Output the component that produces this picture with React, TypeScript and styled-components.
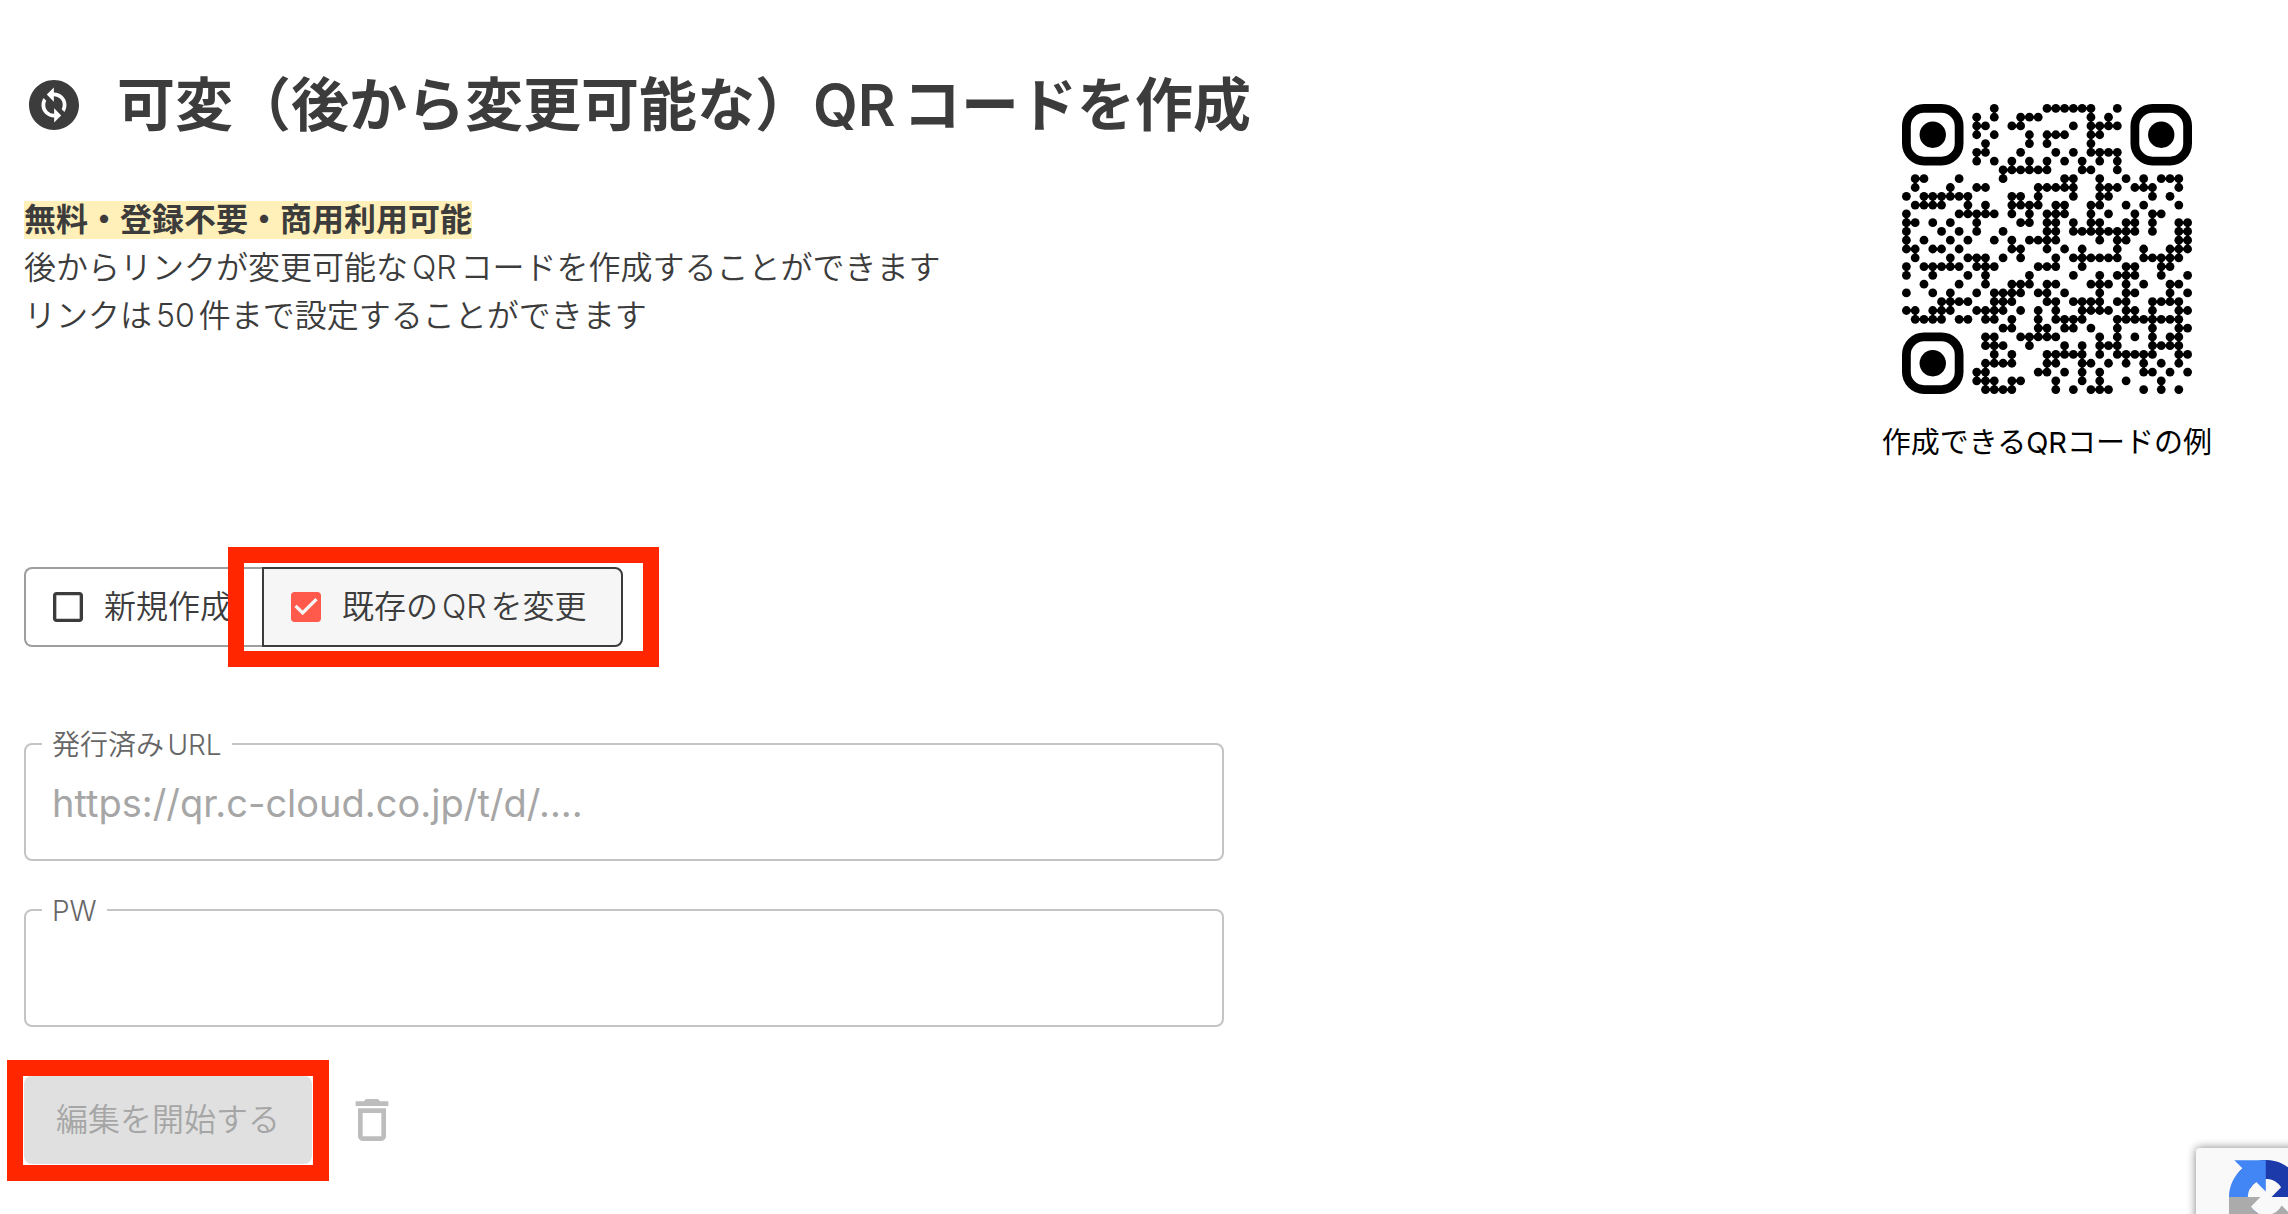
import React from "react";
import styled, { createGlobalStyle } from "styled-components";

const GlobalStyle = createGlobalStyle`
  *, *::before, *::after { box-sizing: border-box; }
  body {
    margin: 0;
    background: #fff;
    color: #3c3c3c;
    font-family: Inter, "Noto Sans CJK JP", sans-serif;
    font-size: 32px;
    font-weight: 350;
    line-height: 48px;
    text-autospace: normal;
  }
`;

const Page = styled.main`
  padding: 0 76px 32px 24px;
`;

const Header = styled.header`
  display: flex;
  justify-content: space-between;
  align-items: flex-start;
  margin-bottom: 103px;
`;

const Intro = styled.div`
  padding-top: 62px;
`;

const TitleRow = styled.div`
  display: flex;
  align-items: center;
  gap: 33px;
  margin-bottom: 48px;
`;

const TitleIcon = styled.svg`
  width: 60px;
  height: 60px;
  fill: currentColor;
`;

const Title = styled.h1`
  margin: 0;
  font-size: 58px;
  line-height: 86px;
  font-weight: 600;
`;

const Lead = styled.p`
  margin: 0;
`;

const Highlight = styled.mark`
  display: inline-block;
  background: #ffefb8;
  color: inherit;
  font-weight: 700;
  line-height: 38px;
`;

const Example = styled.figure`
  display: flex;
  flex-direction: column;
  align-items: center;
  gap: 28px;
  margin: 0;
  padding-top: 104px;
`;

const QrImage = styled.svg`
  width: 290px;
  height: 290px;
`;

const Caption = styled.figcaption`
  color: #000;
  font-size: 29px;
  font-weight: 400;
  line-height: 42px;
  text-autospace: no-autospace;
`;

const ToggleGroup = styled.div`
  display: flex;
  margin-bottom: 82px;
`;

const Toggle = styled.label<{ $selected?: boolean }>`
  position: relative;
  display: flex;
  align-items: center;
  gap: 16px;
  height: 80px;
  padding: 0 ${(p) => (p.$selected ? "34px" : "30px")} 0 22px;
  border: 2px solid ${(p) => (p.$selected ? "#3c3c3c" : "#9e9e9e")};
  border-right-width: ${(p) => (p.$selected ? "2px" : "0")};
  border-radius: ${(p) => (p.$selected ? "0 8px 8px 0" : "8px 0 0 8px")};
  background: ${(p) => (p.$selected ? "#f6f6f6" : "#fff")};
  cursor: pointer;
`;

const HiddenCheck = styled.input`
  position: absolute;
  inset: 0;
  width: 100%;
  height: 100%;
  margin: 0;
  opacity: 0;
`;

const CheckIcon = styled.svg<{ $selected?: boolean }>`
  width: 40px;
  height: 40px;
  fill: ${(p) => (p.$selected ? "#ff5a4c" : "#3c3c3c")};
`;

const Marked = styled.div`
  position: relative;
  display: flex;
`;

const Marker = styled.span<{ $inset: string }>`
  position: absolute;
  inset: ${(p) => p.$inset};
  border: 16px solid #ff2600;
  pointer-events: none;
  z-index: 1;
`;

const Form = styled.form`
  display: flex;
  flex-direction: column;
  gap: 34px;
  max-width: 1200px;
`;

const Field = styled.fieldset`
  min-width: 0;
  height: 132px;
  margin: 0;
  padding: 0;
  border: 2px solid #c4c4c4;
  border-radius: 8px;
`;

const FieldLegend = styled.legend`
  margin-left: 16px;
  padding: 2px 10px 0;
  color: #666;
  font-size: 28px;
  line-height: 28px;
`;

const TextInput = styled.input`
  display: block;
  width: 100%;
  height: 88px;
  padding: 0 26px;
  border: 0;
  outline: 0;
  background: transparent;
  color: #3c3c3c;
  font: inherit;
  font-size: 38px;
  font-weight: 400;

  &::placeholder { color: #a6a6a6; opacity: 1; }
`;

const Actions = styled.div`
  display: flex;
  align-items: center;
  gap: 32px;
  padding-top: 15px;
`;

const StartButton = styled.button`
  height: 88px;
  padding: 0 32px;
  border: 0;
  border-radius: 8px;
  background: #e0e0e0;
  color: #a6a6a6;
  font: inherit;
`;

const DeleteButton = styled.button`
  display: flex;
  padding: 0;
  border: 0;
  background: none;
  color: #bdbdbd;

  svg { width: 56px; height: 56px; fill: currentColor; }
`;

const RecaptchaBadge = styled.aside`
  position: fixed;
  right: -420px;
  bottom: -54px;
  width: 512px;
  height: 120px;
  padding: 12px 33px;
  border-radius: 4px;
  background: #f9f9f9;
  box-shadow: 0 0 10px gray;

  svg { display: block; width: 74px; height: 74px; }
`;

/* Dark columns of every row, finder patterns left out. */
const QR_ROWS: number[][] = [
  [10, 16, 17, 18, 19, 20, 21, 24],
  [8, 10, 13, 14, 15, 21, 23],
  [8, 9, 12, 13, 19, 21, 22, 23, 24],
  [8, 10, 14, 16, 17, 18, 21, 22],
  [9, 14, 16, 21],
  [8, 9, 13, 17, 19, 21, 22, 23, 24],
  [8, 10, 12, 14, 16, 18, 20, 22, 24],
  [11, 12, 13, 14, 15, 16, 20, 21, 24],
  [1, 2, 6, 11, 18, 19, 22, 25, 27, 29, 30, 31],
  [1, 5, 8, 9, 15, 16, 17, 18, 19, 22, 23, 24, 26, 27, 28, 31],
  [0, 2, 3, 4, 5, 6, 7, 12, 13, 15, 19, 22, 23, 28, 30],
  [1, 2, 3, 4, 7, 9, 12, 13, 14, 15, 17, 18, 21, 22, 25, 27, 31],
  [0, 6, 7, 8, 9, 10, 12, 14, 16, 17, 18, 21, 23, 26, 28, 29],
  [0, 1, 3, 5, 8, 13, 14, 16, 17, 19, 21, 22, 25, 26, 28, 31, 32],
  [0, 4, 6, 8, 11, 16, 17, 19, 20, 21, 22, 23, 24, 25, 26, 28, 31, 32],
  [0, 2, 5, 7, 10, 12, 14, 15, 16, 17, 22, 24, 25, 31, 32],
  [0, 1, 3, 4, 6, 12, 13, 16, 18, 20, 24, 27, 30, 31, 32],
  [1, 5, 7, 8, 9, 11, 13, 17, 19, 20, 21, 22, 23, 24, 27, 28, 29, 30, 31],
  [0, 2, 3, 4, 5, 6, 8, 9, 10, 15, 16, 17, 20, 25, 26, 29, 30],
  [0, 3, 7, 9, 14, 19, 22, 24, 25, 26, 29, 32],
  [2, 6, 9, 12, 13, 14, 16, 17, 21, 22, 23, 25, 27, 30, 31],
  [0, 3, 5, 8, 10, 11, 12, 13, 15, 16, 18, 22, 25, 26, 30, 32],
  [4, 5, 6, 7, 10, 11, 12, 16, 17, 19, 20, 21, 22, 24, 25, 28, 29, 30, 31],
  [0, 1, 3, 4, 5, 8, 9, 10, 11, 13, 15, 17, 20, 21, 22, 23, 25, 26, 28, 31, 32],
  [1, 2, 3, 4, 6, 7, 9, 10, 12, 15, 17, 18, 19, 20, 24, 25, 26, 27, 28, 29, 30, 31],
  [11, 12, 15, 16, 18, 19, 21, 24, 28, 31, 32],
  [9, 10, 13, 14, 15, 16, 17, 22, 24, 26, 28, 30, 31],
  [9, 10, 11, 14, 18, 20, 22, 23, 24, 28, 29, 30, 31],
  [10, 12, 16, 17, 18, 19, 20, 22, 24, 25, 26, 27, 28, 31, 32],
  [9, 10, 11, 12, 16, 17, 20, 21, 23, 25, 27, 29, 31],
  [8, 9, 15, 16, 18, 20, 22, 27, 28, 30, 32],
  [8, 9, 10, 12, 13, 17, 20, 22, 25, 29],
  [9, 10, 11, 12, 17, 19, 21, 22, 23, 27, 29, 31],
];

const FINDERS = [[0, 0], [26, 0], [0, 26]];

function QrCode() {
  return (
    <QrImage viewBox="0 0 33 33" role="img" aria-label="QR">
      {FINDERS.map(([x, y]) => (
        <g key={`${x}-${y}`}>
          <rect x={x + 0.5} y={y + 0.5} width="6" height="6" rx="2" fill="none" stroke="#000" />
          <circle cx={x + 3.5} cy={y + 3.5} r="1.5" />
        </g>
      ))}
      {QR_ROWS.map((cols, y) =>
        cols.map((x) => <circle key={`${x}-${y}`} cx={x + 0.5} cy={y + 0.5} r="0.5" />)
      )}
      {QR_ROWS.map((cols, y) =>
        cols.map((x) => (
          <React.Fragment key={`${x}-${y}`}>
            {cols.includes(x + 1) && <rect x={x + 0.75} y={y + 0.35} width="0.5" height="0.3" />}
            {QR_ROWS[y + 1]?.includes(x) && <rect x={x + 0.35} y={y + 0.75} width="0.3" height="0.5" />}
          </React.Fragment>
        ))
      )}
    </QrImage>
  );
}

export default function App() {
  return (
    <>
      <GlobalStyle />
      <Page>
        <Header>
          <Intro>
            <TitleRow>
              <TitleIcon viewBox="0 0 24 24" aria-hidden="true">
                <path d="M12 2C6.48 2 2 6.48 2 12s4.48 10 10 10 10-4.48 10-10S17.52 2 12 2m.06 17v-2.01H12c-1.28 0-2.56-.49-3.54-1.46-1.71-1.71-1.92-4.35-.64-6.29l1.1 1.1c-.71 1.33-.53 3.01.59 4.13.7.7 1.62 1.03 2.54 1.01v-2.14l2.83 2.83zm4.11-4.24-1.1-1.1c.71-1.33.53-3.01-.59-4.13C13.79 8.84 12.9 8.5 12 8.5h-.06v2.15L9.11 7.83 11.94 5v2.02c1.3-.02 2.61.45 3.6 1.45 1.7 1.7 1.91 4.35.63 6.29" />
              </TitleIcon>
              <Title>可変（後から変更可能な）QRコードを作成</Title>
            </TitleRow>
            <Lead><Highlight>無料・登録不要・商用利用可能</Highlight></Lead>
            <Lead>後からリンクが変更可能なQRコードを作成することができます</Lead>
            <Lead>リンクは50件まで設定することができます</Lead>
          </Intro>
          <Example>
            <QrCode />
            <Caption>作成できるQRコードの例</Caption>
          </Example>
        </Header>

        <ToggleGroup>
          <Toggle>
            <HiddenCheck type="checkbox" />
            <CheckIcon viewBox="0 0 24 24" aria-hidden="true">
              <path d="M19 5v14H5V5h14m0-2H5c-1.1 0-2 .9-2 2v14c0 1.1.9 2 2 2h14c1.1 0 2-.9 2-2V5c0-1.1-.9-2-2-2z" />
            </CheckIcon>
            新規作成
          </Toggle>
          <Marked>
            <Toggle $selected>
              <HiddenCheck type="checkbox" defaultChecked />
              <CheckIcon $selected viewBox="0 0 24 24" aria-hidden="true">
                <path d="M19 3H5c-1.11 0-2 .9-2 2v14c0 1.1.89 2 2 2h14c1.11 0 2-.9 2-2V5c0-1.1-.89-2-2-2zm-9 14l-5-5 1.41-1.41L10 14.17l7.59-7.59L19 8l-9 9z" />
              </CheckIcon>
              既存のQRを変更
            </Toggle>
            <Marker $inset="-20px -36px -20px -34px" />
          </Marked>
        </ToggleGroup>

        <Form>
          <Field>
            <FieldLegend><label htmlFor="issued-url">発行済みURL</label></FieldLegend>
            <TextInput id="issued-url" type="text" placeholder="https://qr.c-cloud.co.jp/t/d/...." />
          </Field>
          <Field>
            <FieldLegend><label htmlFor="pw">PW</label></FieldLegend>
            <TextInput id="pw" type="password" />
          </Field>
          <Actions>
            <Marked>
              <StartButton type="button" disabled>編集を開始する</StartButton>
              <Marker $inset="-16px -17px -17px -17px" />
            </Marked>
            <DeleteButton type="button" aria-label="削除">
              <svg viewBox="0 0 24 24" aria-hidden="true">
                <path d="M6 19c0 1.1.9 2 2 2h8c1.1 0 2-.9 2-2V7H6v12zM8 9h8v10H8V9zm7.5-5l-1-1h-5l-1 1H5v2h14V4z" />
              </svg>
            </DeleteButton>
          </Actions>
        </Form>
      </Page>

      <RecaptchaBadge aria-label="reCAPTCHA">
        <svg viewBox="0 0 64 64" aria-hidden="true">
          <path fill="#1c3aa9" d="M64 31.955a33.4 33.4 0 0 0-.023-1.4V4.687l-7.15 7.15C50.976 4.674 42.067.093 32.09.093c-10.383 0-19.6 4.96-25.42 12.64l11.72 11.843a15.53 15.53 0 0 1 4.75-5.33c2.05-1.6 4.952-2.906 8.968-2.906.485 0 .86.057 1.135.163 4.976.393 9.288 3.14 11.828 7.124l-8.296 8.296 27.225-.007" />
          <path fill="#4285f4" d="M31.862.094a33.4 33.4 0 0 0-1.4.023H4.594l7.15 7.15C4.582 13.118 0 22.027 0 32.004c0 10.383 4.96 19.6 12.64 25.42l11.843-11.72a15.53 15.53 0 0 1-5.33-4.75c-1.6-2.05-2.906-4.952-2.906-8.968 0-.485.057-.86.163-1.135.393-4.976 3.14-9.288 7.124-11.828l8.296 8.296-.007-27.225" />
          <path fill="#ababab" d="M.001 32.045a33.4 33.4 0 0 0 .023 1.4v25.868l7.15-7.15c5.85 7.163 14.76 11.745 24.737 11.745 10.383 0 19.6-4.96 25.42-12.64L45.61 39.424a15.53 15.53 0 0 1-4.75 5.33c-2.05 1.6-4.952 2.906-8.968 2.906-.485 0-.86-.057-1.135-.163-4.976-.393-9.288-3.14-11.828-7.124l8.296-8.296L0 32.045" />
        </svg>
      </RecaptchaBadge>
    </>
  );
}
